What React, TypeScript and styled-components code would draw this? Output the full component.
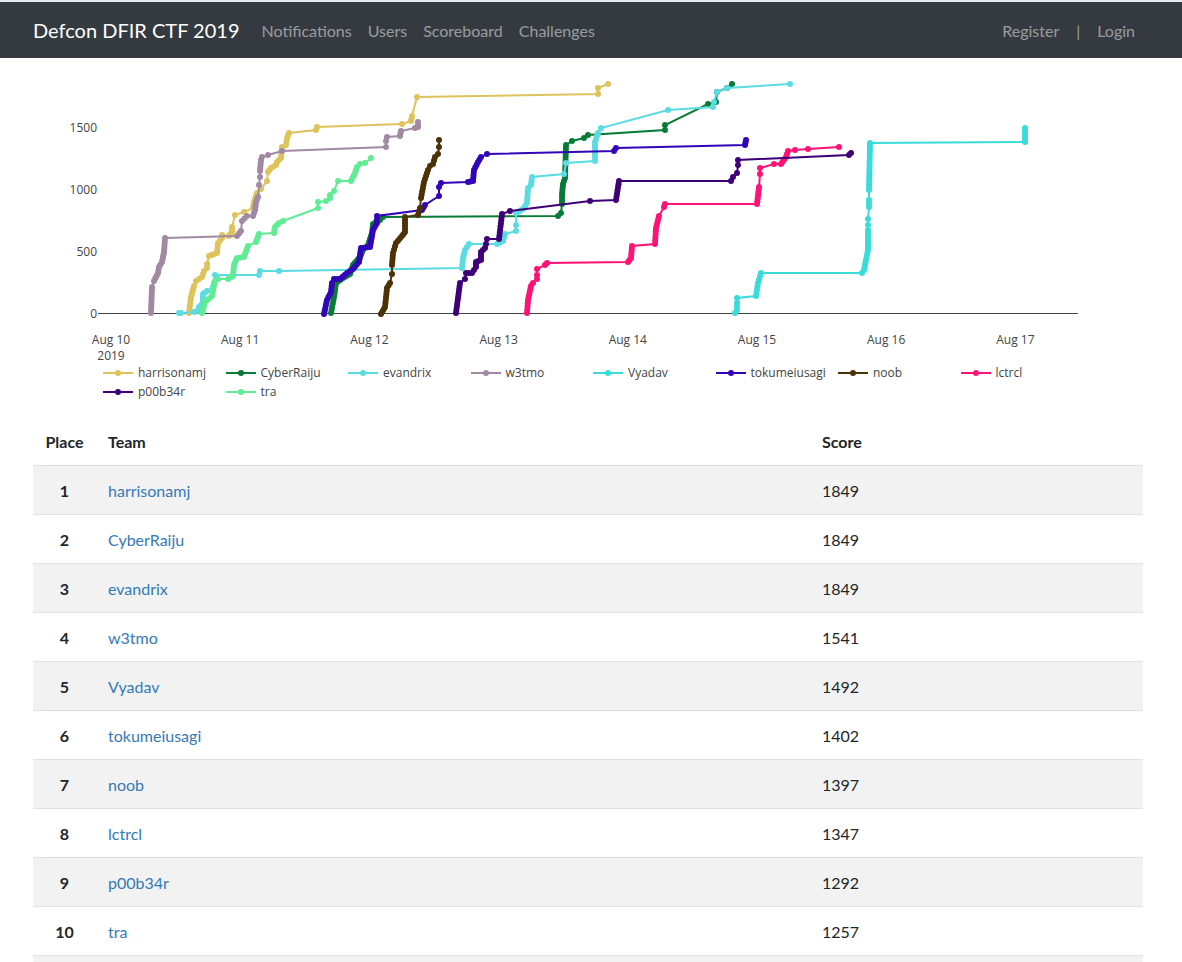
import React from "react";
import styled, { createGlobalStyle } from "styled-components";

const GlobalStyle = createGlobalStyle`
  *, *::before, *::after { box-sizing: border-box; }
  body {
    margin: 0;
    background: #fff;
    color: #212529;
    font-family: Lato, "Liberation Sans", sans-serif;
    font-size: 16px;
    line-height: 24px;
  }
`;

const Page = styled.div`
  border-top: 2px solid #e9ecef;
`;

const Container = styled.div`
  width: 100%;
  max-width: 1140px;
  margin: 0 auto;
  padding: 0 15px;
`;

const Navbar = styled.header`
  background: #343a40;
  padding: 8px 6px 8px 0;
`;

const NavRow = styled(Container)`
  display: flex;
  align-items: center;
`;

const Brand = styled.a`
  margin-right: 14px;
  padding: 5px 0;
  color: #fff;
  font-size: 20px;
  line-height: 30px;
  text-decoration: none;
  white-space: nowrap;
`;

const NavList = styled.ul<{ $end?: boolean }>`
  display: flex;
  list-style: none;
  margin: 0 0 0 ${(p) => (p.$end ? "auto" : "0")};
  padding: 0;
`;

const NavLink = styled.a`
  display: block;
  padding: 9px 8px 7px;
  color: rgba(255, 255, 255, 0.5);
  text-decoration: none;
`;

const Divider = styled.span`
  display: block;
  padding: 9px 9px 7px;
  color: rgba(255, 255, 255, 0.5);
`;

const Main = styled.main`
  padding-right: 6px;
`;

const Chart = styled.svg`
  display: block;
  width: 100%;
  height: auto;
`;

const AxisText = styled.text`
  font-family: "Open Sans", sans-serif;
  font-size: 12px;
  fill: #444;
`;

const Legend = styled.ul`
  display: grid;
  grid-template-columns: repeat(8, 1fr);
  list-style: none;
  margin: 0 65px 16px;
  padding: 0;
`;

const LegendItem = styled.li`
  display: flex;
  align-items: center;
  gap: 5px;
  padding-left: 5px;
  min-width: 0;
  height: 19px;
  color: #444;
  font-family: "Open Sans", sans-serif;
  font-size: 12px;
  line-height: 19px;
  white-space: nowrap;
`;

const Swatch = styled.svg`
  flex: none;
`;

const Table = styled.table`
  width: 100%;
  border-collapse: collapse;
`;

const HeadCell = styled.th<{ $width?: string; $center?: boolean }>`
  width: ${(p) => p.$width ?? "auto"};
  padding: 13px 12px 11px;
  font-weight: 700;
  text-align: ${(p) => (p.$center ? "center" : "left")};
`;

const Row = styled.tr`
  border-top: 1px solid #dee2e6;
  &:nth-child(odd) { background: #f2f2f2; }
`;

const PlaceCell = styled.th`
  padding: 13px 12px 11px;
  font-weight: 700;
  text-align: center;
`;

const Cell = styled.td`
  padding: 13px 12px 11px;
`;

const PartialCell = styled.td`
  height: 6px;
  padding: 0;
`;

const TeamLink = styled.a`
  color: #337ab7;
  text-decoration: none;
`;

type Team = { name: string; score: number; color: string; trace: string };

// Each trace is a list of solve positions. A "~" before a point means a rapid
// run of solves leading up to it from the point before.
const teams: Team[] = [
  {
    name: "harrisonamj", score: 1849, color: "#dec35c",
    trace: "189,313 ~191,297 ~194,286 196,281 ~202,277 ~204,271 ~207,268 207,264 209,256 ~217,253 ~218,243 ~222,238 222,235 229,236 ~232,232 ~232,227 235,215 244,212 253,208 ~254,202 ~257,193 261,189 267,181 268,172 ~271,168 ~276,165 ~277,162 ~281,158 ~282,147 ~286,145 ~287,138 ~289,133 316,130 317,127 402,124 411,121 ~412,116 417,97 598,94 598,88 608,84",
  },
  {
    name: "CyberRaiju", score: 1849, color: "#087b36",
    trace: "331,313 ~334,297 ~336,283 ~343,278 ~350,274 ~353,265 ~360,257 ~363,250 ~368,245 ~372,233 ~373,224 ~380,220 383,217 558,216 ~561,213 562,204 ~562,195 ~563,184 ~565,178 ~566,145 572,141 584,138 588,135 665,130 665,125 708,104 716,102 717,92 727,88 732,84",
  },
  {
    name: "evandrix", score: 1849, color: "#5adce2",
    trace: "179,313 181,313 194,312 ~197,311 ~199,307 ~203,303 ~203,294 ~207,291 213,287 ~214,283 215,275 259,275 ~260,271 279,271 462,268 ~463,258 ~465,250 ~469,244 497,244 ~503,241 ~505,234 516,231 516,225 516,213 ~523,209 ~527,203 ~528,188 ~531,185 ~532,177 564,174 566,163 595,161 ~595,142 ~598,133 601,128 668,110 713,107 714,102 717,92 727,88 790,84",
  },
  {
    name: "w3tmo", score: 1541, color: "#a189a3",
    trace: "151,313 ~152,287 154,281 ~158,273 ~159,267 ~162,262 ~163,257 ~164,252 ~165,238 237,236 ~241,231 242,221 ~247,216 253,216 ~255,210 ~256,202 ~258,197 259,185 260,177 260,171 ~261,160 ~262,157 268,155 282,151 386,147 386,141 387,137 400,136 ~401,131 415,128 ~418,127 ~418,122",
  },
  {
    name: "Vyadav", score: 1492, color: "#3adcdb",
    trace: "735,313 ~737,310 ~737,303 737,298 756,296 ~758,283 ~761,273 862,273 ~864,270 ~868,250 ~868,230 868,225 868,219 869,207 ~869,200 869,190 ~870,143 1025,142 ~1025,128",
  },
  {
    name: "tokumeiusagi", score: 1402, color: "#3206b8",
    trace: "324,314 ~327,300 ~331,292 ~332,283 334,279 ~340,279 ~347,273 ~353,269 ~359,262 ~361,248 ~370,247 ~373,230 ~377,223 ~377,216 422,210 ~425,205 439,196 439,187 ~441,183 468,182 ~473,181 ~474,170 ~478,162 ~481,157 487,154 614,151 ~616,148 745,145 ~746,140",
  },
  {
    name: "noob", score: 1397, color: "#4d3107",
    trace: "381,314 ~385,307 ~387,288 ~390,283 392,274 392,265 ~393,253 ~396,243 ~402,236 ~405,232 ~405,217 418,215 ~420,208 421,198 ~424,182 ~428,170 ~430,166 ~433,164 ~435,157 ~438,154 439,147 439,140",
  },
  {
    name: "lctrcl", score: 1347, color: "#ff1276",
    trace: "527,313 ~528,300 ~531,286 ~533,283 537,279 537,275 537,269 545,265 ~547,263 628,262 ~631,258 ~632,246 655,244 ~656,228 ~659,216 664,207 ~665,204 757,204 ~759,187 760,174 760,168 774,164 781,164 ~786,157 ~788,151 795,150 808,149 839,147",
  },
  {
    name: "p00b34r", score: 1292, color: "#3e0078",
    trace: "456,313 ~458,298 ~460,283 465,279 466,273 ~472,273 ~476,267 ~476,262 ~481,260 ~481,252 ~485,248 ~486,244 487,239 499,239 ~502,214 510,211 590,201 616,200 ~619,181 731,181 ~733,177 737,173 738,165 738,160 849,155 ~851,153",
  },
  {
    name: "tra", score: 1257, color: "#5fec95",
    trace: "202,313 ~205,302 ~212,296 ~215,281 ~218,279 228,279 ~233,276 ~234,265 ~237,258 ~244,257 ~248,246 256,242 ~259,234 274,233 ~275,227 ~279,223 ~283,221 318,208 318,202 326,201 330,198 ~330,195 334,191 338,181 351,181 ~355,173 ~357,167 ~360,164 365,163 371,158",
  },
];

function expand(trace: string): [number, number][] {
  const points: [number, number][] = [];
  trace.split(" ").forEach((token) => {
    const [x, y] = token.replace("~", "").split(",").map(Number);
    if (token.startsWith("~")) {
      const [px, py] = points[points.length - 1];
      const steps = Math.max(1, Math.round(Math.hypot(x - px, y - py) / 3));
      for (let i = 1; i < steps; i++) {
        points.push([px + ((x - px) * i) / steps, py + ((y - py) * i) / steps]);
      }
    }
    points.push([x, y]);
  });
  return points;
}

function Trace({ team }: { team: Team }) {
  const points = expand(team.trace);
  return (
    <g>
      <polyline
        points={points.map((p) => p.join(",")).join(" ")}
        fill="none"
        stroke={team.color}
        strokeWidth="2"
      />
      {points.map(([x, y], i) => (
        <circle key={i} cx={x} cy={y} r="3" fill={team.color} />
      ))}
    </g>
  );
}

const yTicks = [
  { label: "0", y: 318 },
  { label: "500", y: 256 },
  { label: "1000", y: 194 },
  { label: "1500", y: 132 },
];

const days = [10, 11, 12, 13, 14, 15, 16, 17];

function ScoreGraph() {
  return (
    <Chart viewBox="33 58 1110 305" role="img" aria-label="Top 10 teams">
      {yTicks.map((t) => (
        <AxisText key={t.label} x="97" y={t.y} textAnchor="end">{t.label}</AxisText>
      ))}
      {days.map((d, i) => (
        <AxisText key={d} x={111 + i * 129.2} y="344" textAnchor="middle">{`Aug ${d}`}</AxisText>
      ))}
      <AxisText x="111" y="360" textAnchor="middle">2019</AxisText>
      <path d="M98 313.5H1078" stroke="#444" strokeWidth="1" />
      {teams.map((t) => <Trace key={t.name} team={t} />)}
    </Chart>
  );
}

export default function App() {
  return (
    <Page>
      <GlobalStyle />
      <Navbar>
        <NavRow as="nav">
          <Brand href="#">Defcon DFIR CTF 2019</Brand>
          <NavList>
            {["Notifications", "Users", "Scoreboard", "Challenges"].map((label) => (
              <li key={label}><NavLink href="#">{label}</NavLink></li>
            ))}
          </NavList>
          <NavList $end>
            <li><NavLink href="#">Register</NavLink></li>
            <li><Divider>|</Divider></li>
            <li><NavLink href="#">Login</NavLink></li>
          </NavList>
        </NavRow>
      </Navbar>
      <Main>
        <Container>
          <ScoreGraph />
          <Legend>
            {teams.map((t) => (
              <LegendItem key={t.name}>
                <Swatch width="30" height="6" aria-hidden="true">
                  <path d="M0 3H30" stroke={t.color} strokeWidth="2" />
                  <circle cx="15" cy="3" r="3" fill={t.color} />
                </Swatch>
                {t.name}
              </LegendItem>
            ))}
          </Legend>
          <Table>
            <thead>
              <tr>
                <HeadCell scope="col" $width="63px" $center>Place</HeadCell>
                <HeadCell scope="col">Team</HeadCell>
                <HeadCell scope="col" $width="30%">Score</HeadCell>
              </tr>
            </thead>
            <tbody>
              {teams.map((t, i) => (
                <Row key={t.name}>
                  <PlaceCell scope="row">{i + 1}</PlaceCell>
                  <Cell><TeamLink href="#">{t.name}</TeamLink></Cell>
                  <Cell>{t.score}</Cell>
                </Row>
              ))}
              <Row aria-hidden="true"><PartialCell colSpan={3} /></Row>
            </tbody>
          </Table>
        </Container>
      </Main>
    </Page>
  );
}
